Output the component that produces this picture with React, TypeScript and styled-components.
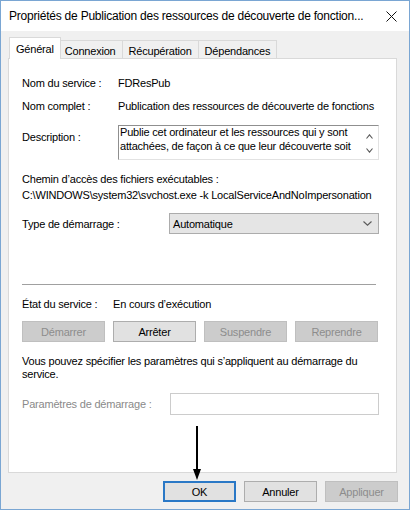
import React from "react";
import styled, { createGlobalStyle } from "styled-components";

const Global = createGlobalStyle`
  html, body { margin: 0; padding: 0; background: #ffffff; }
  body {
    font-family: "Liberation Sans", Arial, sans-serif;
    font-size: 11px;
    letter-spacing: -0.2px;
    color: #000000;
  }
  * { box-sizing: border-box; }
`;

const Window = styled.div`
  position: relative;
  width: 410px;
  height: 510px;
  border: 1px solid #7aa6d3;
  display: flex;
  flex-direction: column;
  background: #f0f0f0;
`;

const TitleBar = styled.div`
  height: 30px;
  flex: none;
  background: #ffffff;
  display: flex;
  align-items: center;
  padding-left: 8px;
`;

const Title = styled.div`
  flex: 1;
  font-size: 12px;
  letter-spacing: -0.22px;
  white-space: nowrap;
  color: #000;
`;

const CloseButton = styled.div`
  width: 38px;
  height: 30px;
  flex: none;
  display: flex;
  align-items: center;
  justify-content: center;
  padding-left: 2px;
`;

const Body = styled.div`
  flex: 1;
  display: flex;
  flex-direction: column;
  padding: 6px 12px 7px 7px;
`;

const TabStrip = styled.div`
  height: 21px;
  flex: none;
  display: flex;
  align-items: flex-end;
  padding-left: 3px;
`;

const Tab = styled.div<{ $active?: boolean }>`
  display: flex;
  align-items: center;
  justify-content: center;
  border: 1px solid #d9d9d9;
  border-bottom: none;
  white-space: nowrap;
  ${(p) =>
    p.$active
      ? `
    height: 22px;
    margin: 0 -2px -1px -2px;
    padding: 0 6px;
    background: #ffffff;
    position: relative;
    z-index: 1;
  `
      : `
    height: 18px;
    margin-left: -1px;
    padding: 2px 6px 0 6px;
    background: #f0f0f0;
  `}
`;

const Panel = styled.div`
  flex: 1;
  background: #ffffff;
  border: 1px solid #d9d9d9;
  padding: 17px 17px 0 13px;
  display: flex;
  flex-direction: column;
`;

const Row = styled.div<{ $mt: number; $align?: string }>`
  display: flex;
  align-items: ${(p) => p.$align || "center"};
  margin-top: ${(p) => p.$mt}px;
`;

const Label = styled.div<{ $w: number; $mt?: number; $muted?: boolean }>`
  width: ${(p) => p.$w}px;
  flex: none;
  line-height: 14px;
  white-space: nowrap;
  margin-top: ${(p) => p.$mt || 0}px;
  color: ${(p) => (p.$muted ? "#8a8a8a" : "#000")};
`;

const Value = styled.div`
  line-height: 14px;
  white-space: nowrap;
`;

const Line = styled.div<{ $mt: number; $lh?: number }>`
  margin-top: ${(p) => p.$mt}px;
  line-height: ${(p) => p.$lh || 14}px;
  white-space: nowrap;
`;

const DescBox = styled.div`
  width: 261px;
  height: 35px;
  display: flex;
  border: 1px solid;
  border-color: #8f8f8f #e2e2e2 #e2e2e2 #8f8f8f;
  background: #fff;
`;

const DescText = styled.div`
  flex: 1;
  padding-left: 1px;
  line-height: 13.5px;
  white-space: nowrap;
  overflow: hidden;
`;

const ScrollCol = styled.div`
  width: 17px;
  flex: none;
  display: flex;
  flex-direction: column;
  align-items: center;
  padding-top: 8px;
  gap: 9px;
`;

const Combo = styled.div`
  width: 210px;
  height: 21px;
  display: flex;
  align-items: center;
  justify-content: space-between;
  padding: 0 6px 0 3px;
  background: #e5e5e5;
  border: 1px solid #acacac;
`;

const Separator = styled.div`
  height: 1px;
  background: #a0a0a0;
  margin: 50px 3px 0 0;
`;

const ButtonGrid = styled.div`
  display: grid;
  grid-template-columns: repeat(4, 83px);
  column-gap: 8px;
  margin-top: 10px;
`;

const WinButton = styled.div<{ $variant?: "normal" | "disabled" | "default"; $w?: number }>`
  height: 21px;
  ${(p) => (p.$w ? `width: ${p.$w}px;` : "")}
  display: flex;
  align-items: center;
  justify-content: center;
  white-space: nowrap;
  ${(p) =>
    p.$variant === "disabled"
      ? `background: #cccccc; border: 1px solid #bfbfbf; color: #8c8c8c;`
      : p.$variant === "default"
      ? `background: #e1e1e1; border: 2px solid #2a78c6; color: #000;`
      : `background: #e1e1e1; border: 1px solid #adadad; color: #000;`}
`;

const Paragraph = styled.div`
  margin-top: 13px;
  line-height: 13px;
`;

const ParamInput = styled.div`
  width: 209px;
  height: 22px;
  border: 1px solid #cccccc;
  background: #ffffff;
`;

const Footer = styled.div`
  flex: none;
  display: flex;
  justify-content: flex-end;
  gap: 8px;
  margin: 8px -1px 0 0;
`;

const ArrowOverlay = styled.svg`
  position: absolute;
  left: 190px;
  top: 425px;
`;

const Chevron = ({ up, w = 8 }: { up?: boolean; w?: number }) => (
  <svg width={w} height="5" viewBox={`0 0 ${w} 5`}>
    <polyline
      points={up ? `0.5,4.5 ${w / 2},0.8 ${w - 0.5},4.5` : `0.5,0.5 ${w / 2},4.2 ${w - 0.5},0.5`}
      fill="none"
      stroke="#5a5a5a"
      strokeWidth="1.1"
    />
  </svg>
);

export default function App() {
  return (
    <>
      <Global />
      <Window>
        <TitleBar>
          <Title>Propriétés de Publication des ressources de découverte de fonction...</Title>
          <CloseButton>
            <svg width="11" height="11" viewBox="0 0 11 11">
              <path d="M0.5 0.5 L10.5 10.5 M10.5 0.5 L0.5 10.5" stroke="#111" strokeWidth="1" />
            </svg>
          </CloseButton>
        </TitleBar>
        <Body>
          <TabStrip>
            <Tab $active>Général</Tab>
            <Tab>Connexion</Tab>
            <Tab>Récupération</Tab>
            <Tab>Dépendances</Tab>
          </TabStrip>
          <Panel>
            <Row $mt={0}>
              <Label $w={96}>Nom du service :</Label>
              <Value>FDResPub</Value>
            </Row>
            <Row $mt={9}>
              <Label $w={96}>Nom complet :</Label>
              <Value>Publication des ressources de découverte de fonctions</Value>
            </Row>
            <Row $mt={12} $align="flex-start">
              <Label $w={96} $mt={5}>Description :</Label>
              <DescBox>
                <DescText>
                  Publie cet ordinateur et les ressources qui y sont
                  <br />
                  attachées, de façon à ce que leur découverte soit
                </DescText>
                <ScrollCol>
                  <Chevron up w={7} />
                  <Chevron w={7} />
                </ScrollCol>
              </DescBox>
            </Row>
            <Line $mt={12}>Chemin d’accès des fichiers exécutables :</Line>
            <Line $mt={2}>C:\WINDOWS\system32\svchost.exe -k LocalServiceAndNoImpersonation</Line>
            <Row $mt={11}>
              <Label $w={147}>Type de démarrage :</Label>
              <Combo>
                <span>Automatique</span>
                <Chevron w={9} />
              </Combo>
            </Row>
            <Separator />
            <Row $mt={12}>
              <Label $w={91}>État du service :</Label>
              <Value>En cours d’exécution</Value>
            </Row>
            <ButtonGrid>
              <WinButton $variant="disabled">Démarrer</WinButton>
              <WinButton>Arrêter</WinButton>
              <WinButton $variant="disabled">Suspendre</WinButton>
              <WinButton $variant="disabled">Reprendre</WinButton>
            </ButtonGrid>
            <Paragraph>
              Vous pouvez spécifier les paramètres qui s’appliquent au démarrage du
              <br />
              service.
            </Paragraph>
            <Row $mt={12}>
              <Label $w={148} $muted>Paramètres de démarrage :</Label>
              <ParamInput />
            </Row>
          </Panel>
          <Footer>
            <WinButton $variant="default" $w={73}>OK</WinButton>
            <WinButton $w={73}>Annuler</WinButton>
            <WinButton $variant="disabled" $w={73}>Appliquer</WinButton>
          </Footer>
        </Body>
        <ArrowOverlay width="12" height="56" viewBox="0 0 12 56">
          <line x1="6" y1="0" x2="6" y2="46" stroke="#000" strokeWidth="2" />
          <polygon points="2,43 10,43 6,54" fill="#000" />
        </ArrowOverlay>
      </Window>
    </>
  );
}
